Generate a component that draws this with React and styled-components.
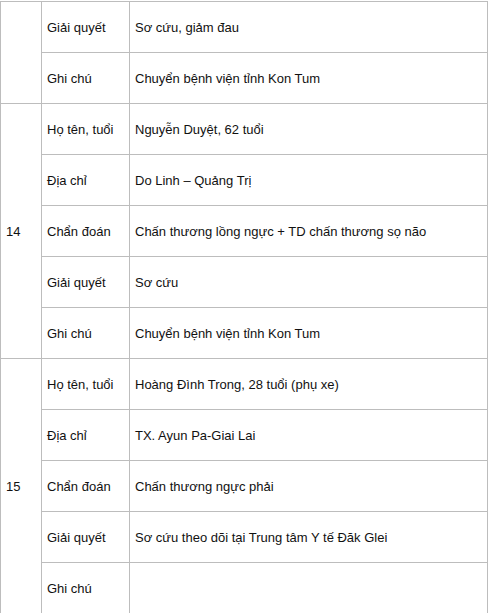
import React from 'react'
import styled, { createGlobalStyle } from 'styled-components'

const GlobalStyle = createGlobalStyle`
  body {
    margin: 0;
    background: #fff;
    font-family: "Liberation Sans", Arial, sans-serif;
  }
`

const groups = [
  {
    no: '',
    rows: [
      ['Giải quyết', 'Sơ cứu, giảm đau'],
      ['Ghi chú', 'Chuyển bệnh viện tỉnh Kon Tum'],
    ],
  },
  {
    no: '14',
    rows: [
      ['Họ tên, tuổi', 'Nguyễn Duyệt, 62 tuổi'],
      ['Địa chỉ', 'Do Linh – Quảng Trị'],
      ['Chẩn đoán', 'Chấn thương lồng ngực + TD chấn thương sọ não'],
      ['Giải quyết', 'Sơ cứu'],
      ['Ghi chú', 'Chuyển bệnh viện tỉnh Kon Tum'],
    ],
  },
  {
    no: '15',
    rows: [
      ['Họ tên, tuổi', 'Hoàng Đình Trong, 28 tuổi (phụ xe)'],
      ['Địa chỉ', 'TX. Ayun Pa-Giai Lai'],
      ['Chẩn đoán', 'Chấn thương ngực phải'],
      ['Giải quyết', 'Sơ cứu theo dõi tại Trung tâm Y tế Đăk Glei'],
      ['Ghi chú', ''],
    ],
  },
]

const App = () => {
  return (
    <>
      <GlobalStyle />
      <Table>
        {groups.map((g, i) => (
          <Group key={i}>
            <NumCell $span={g.rows.length}>{g.no}</NumCell>
            {g.rows.map(([label, value], j) => (
              <React.Fragment key={j}>
                <Cell>{label}</Cell>
                <Cell>{value}</Cell>
              </React.Fragment>
            ))}
          </Group>
        ))}
      </Table>
    </>
  )
}

export default App

const Table = styled.div`
  width: 488px;
  margin-top: 1px;
  border-left: 1px solid #bdbdbd;
  border-top: 1px solid #bdbdbd;
  box-sizing: border-box;
`

const Group = styled.div`
  display: grid;
  grid-template-columns: 41px 88px 358px;
  grid-auto-rows: 51px;
  grid-auto-flow: row dense;
`

const Cell = styled.div`
  display: flex;
  align-items: center;
  padding-left: 5px;
  border-right: 1px solid #bdbdbd;
  border-bottom: 1px solid #bdbdbd;
  font-size: 13px;
  color: #111;
  white-space: nowrap;
`

const NumCell = styled(Cell)`
  grid-column: 1;
  grid-row: 1 / span ${(p) => p.$span};
`
